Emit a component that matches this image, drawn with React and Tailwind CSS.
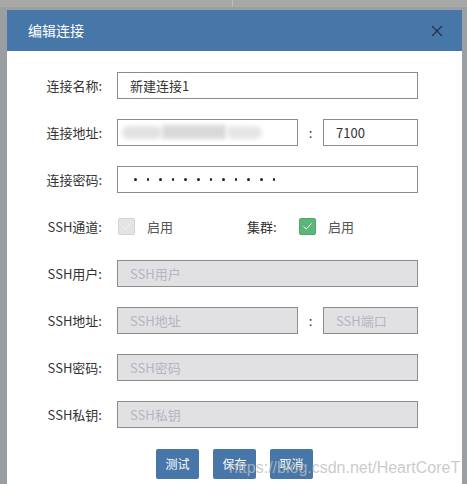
import React from "react";

const cjk = { fontFamily: '"Noto Sans CJK SC", "Liberation Sans", sans-serif' };

const Label = ({ children }) => (
  <div className="w-[95px] shrink-0 text-right text-[13px] text-[#333]">{children}</div>
);

const Row = ({ label, children }) => (
  <div className="flex h-[27px] items-center">
    <Label>{label}</Label>
    <div className="ml-[15px] flex items-center">{children}</div>
  </div>
);

const TextBox = ({ w, children, disabled }) => (
  <div
    className={`h-[27px] ${w} flex items-center border border-[#8c8c8c] px-[12px] text-[13px] ${
      disabled ? "bg-[#e1e1e4] text-[#b3b6bd]" : "bg-white text-[#333]"
    }`}
  >
    {children}
  </div>
);

const Check = ({ on }) => (
  <div
    className={`flex h-[17px] w-[17px] items-center justify-center rounded-[2px] border ${
      on ? "border-[#4fa86a] bg-[#5db679]" : "border-[#d3d3d3] bg-[#e4e4e4]"
    }`}
  >
    <svg width="11" height="9" viewBox="0 0 11 9" fill="none">
      <path d="M1.5 4.5 L4.2 7 L9.5 1.5" stroke={on ? "#fff" : "#f4f4f4"} strokeWidth="1" />
    </svg>
  </div>
);

export default function App() {
  return (
    <div className="relative h-[484px] w-[467px] overflow-hidden bg-[#9c9fa1]" style={cjk}>
      <div className="relative h-[7px] bg-[#a7a7a7]">
        <div className="absolute left-[232px] top-0 h-[7px] w-px bg-[#bdbdbd]" />
      </div>
      <div className="ml-[7px] mt-[3px] w-[455px] bg-white">
        <div className="flex h-[41px] items-center justify-between bg-[#4677a8] pl-[21px] pr-[19px]">
          <span className="text-[14px] text-white">编辑连接</span>
          <svg width="12" height="12" viewBox="0 0 12 12">
            <path d="M1 1 L11 11 M11 1 L1 11" stroke="#26364a" strokeWidth="1.4" />
          </svg>
        </div>
        <div className="flex flex-col gap-[20px] pb-[20px] pt-[21px]">
          <Row label="连接名称:">
            <TextBox w="w-[301px]">新建连接1</TextBox>
          </Row>
          <Row label="连接地址:">
            <div className="relative h-[27px] w-[181px] border border-[#8c8c8c] bg-white">
              <div className="absolute left-[4px] top-[6px] h-[13px] w-[40px] rounded-full bg-[#e2e2e2] blur-[2px]" />
              <div className="absolute left-[44px] top-[5px] h-[14px] w-[64px] bg-[#d9d9d9] blur-[2px]" />
              <div className="absolute left-[108px] top-[6px] h-[13px] w-[36px] rounded-full bg-[#e6e6e6] blur-[2px]" />
            </div>
            <span className="w-[25px] text-center text-[13px] text-[#333]">:</span>
            <TextBox w="w-[95px]">7100</TextBox>
          </Row>
          <Row label="连接密码:">
            <div className="flex h-[27px] w-[301px] items-center gap-[10px] border border-[#8c8c8c] bg-white pl-[16px]">
              {Array.from({ length: 12 }).map((_, i) => (
                <div key={i} className="h-[3px] w-[2.6px] rounded-full bg-[#222]" />
              ))}
            </div>
          </Row>
          <Row label="SSH通道:">
            <div className="ml-[1px] flex items-center">
              <Check />
              <span className="ml-[12px] w-[100px] text-[13px] text-[#555]">启用</span>
              <span className="w-[52px] text-[13px] text-[#333]">集群:</span>
              <Check on />
              <span className="ml-[12px] text-[13px] text-[#555]">启用</span>
            </div>
          </Row>
          <Row label="SSH用户:">
            <TextBox w="w-[301px]" disabled>SSH用户</TextBox>
          </Row>
          <Row label="SSH地址:">
            <TextBox w="w-[181px]" disabled>SSH地址</TextBox>
            <span className="w-[25px] text-center text-[13px] text-[#333]">:</span>
            <TextBox w="w-[95px]" disabled>SSH端口</TextBox>
          </Row>
          <Row label="SSH密码:">
            <TextBox w="w-[301px]" disabled>SSH密码</TextBox>
          </Row>
          <Row label="SSH私钥:">
            <TextBox w="w-[301px]" disabled>SSH私钥</TextBox>
          </Row>
          <div className="mt-[1px] flex justify-center gap-[14px]">
            {["测试", "保存", "取消"].map((t) => (
              <button
                key={t}
                className="h-[30px] w-[43px] rounded-[2px] bg-[#4677a8] text-[12px] text-white"
              >
                {t}
              </button>
            ))}
          </div>
        </div>
      </div>
      <div
        className="absolute left-[229px] top-[456px] whitespace-nowrap text-[16px] text-[#bdbdbd]/80"
        style={{ fontFamily: '"Liberation Sans", Arial, sans-serif' }}
      >
        https://blog.csdn.net/HeartCoreT
      </div>
    </div>
  );
}
